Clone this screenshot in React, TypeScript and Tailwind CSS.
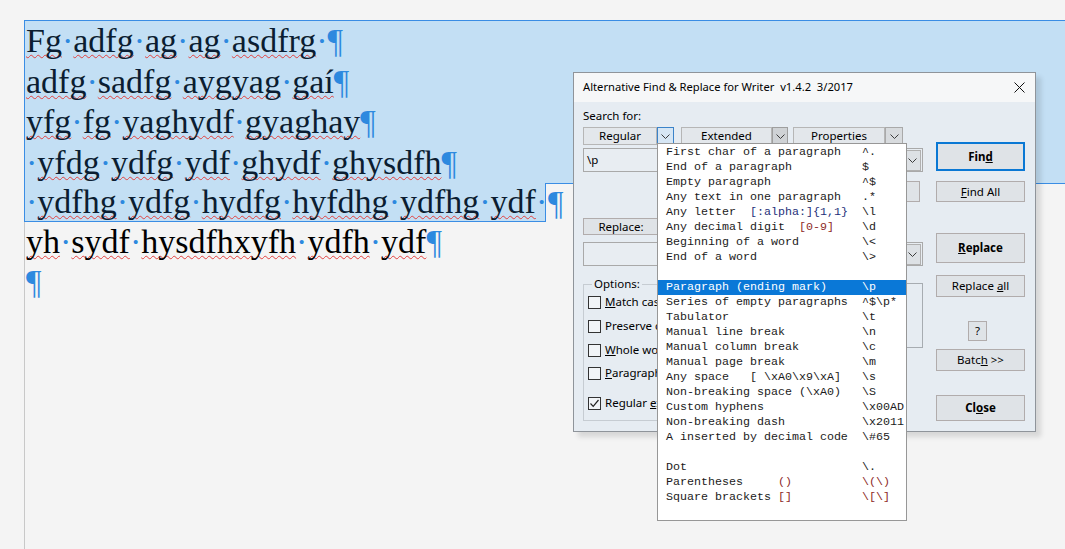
import React from 'react'

const DOT = 'text-[#2d89df]'

function DocLine({ text }: { text: string }) {
  const parts = text.split(/(·|¶)/).filter(Boolean)
  return (
    <div className="whitespace-pre">
      {parts.map((p, i) =>
        p === '·' || p === '¶' ? (
          <span key={i} className={DOT}>
            {p}
          </span>
        ) : (
          <span
            key={i}
            className="underline decoration-wavy decoration-[#e2413f] decoration-1 underline-offset-[2px] [text-decoration-skip-ink:none]"
          >
            {p}
          </span>
        ),
      )}
    </div>
  )
}

function Document() {
  return (
    <div className="flex h-full flex-col pl-[24px] pt-[20px] font-['Liberation_Serif',serif] text-[34px]">
      <div className="border-l border-t border-[#3a8de4] bg-[#c3dff4] pl-[1px] leading-[40.5px] text-[#0b1d31]">
        <DocLine text="Fg·adfg·ag·ag·asdfrg·¶" />
        <DocLine text="adfg·sadfg·aygyag·gaí¶" />
        <DocLine text="yfg·fg·yaghydf·gyaghay¶" />
        <DocLine text="·yfdg·ydfg·ydf·ghydf·ghysdfh¶" />
      </div>
      <div className="flex leading-[38px]">
        <div className="w-[522px] border-b border-l border-r border-[#3a8de4] bg-[#c3dff4] pl-[1px] text-[#0b1d31]">
          <DocLine text="·ydfhg·ydfg·hydfg·hyfdhg·ydfhg·ydf·" />
        </div>
        <div className="flex-1 border-t border-[#3a8de4] pl-[2px]">
          <span className={DOT}>¶</span>
        </div>
      </div>
      <div className="flex-1 border-l border-[#c8c8c8] pl-[1px] leading-[40px] text-black">
        <DocLine text="yh·sydf·hysdfhxyfh·ydfh·ydf¶" />
        <DocLine text="¶" />
      </div>
    </div>
  )
}

function Chevron() {
  return (
    <svg width="9" height="5" viewBox="0 0 9 5" fill="none">
      <path d="M0.5 0.5 L4.5 4.5 L8.5 0.5" stroke="#3c3c3c" strokeWidth="1" />
    </svg>
  )
}

function Btn({
  children,
  className = '',
}: {
  children: React.ReactNode
  className?: string
}) {
  return (
    <div
      className={`flex items-center justify-center border border-[#b1acac] bg-[#dfe3e7] whitespace-pre ${className}`}
    >
      {children}
    </div>
  )
}

function Combo({ label, width, arrowClass }: { label: string; width: string; arrowClass: string }) {
  return (
    <div className="flex h-full">
      <div className={`flex items-center justify-center border border-[#b6b6b6] bg-[#e3e7eb] ${width}`}>
        {label}
      </div>
      <div className={`flex items-center justify-center ${arrowClass}`}>
        <Chevron />
      </div>
    </div>
  )
}

function InputCombo({ value }: { value?: string }) {
  return (
    <div className="flex h-[24px] items-center border border-[#a9a9a9] bg-[#e8edf2] pl-[3px] pr-px">
      <span className="flex-1">{value}</span>
      <div className="flex h-[21px] w-[17px] items-center justify-center border border-[#b0b0b0] bg-[#dde1e5]">
        <Chevron />
      </div>
    </div>
  )
}

function Check({ label, checked }: { label: React.ReactNode; checked?: boolean }) {
  return (
    <div className="flex h-[16px] items-center gap-[4px]">
      <span className="flex size-[13px] shrink-0 items-center justify-center border border-[#333] bg-[#f1f4f7]">
        {checked && (
          <svg width="11" height="11" viewBox="0 0 11 11" fill="none">
            <path d="M1.5 5.5 L4.2 8.3 L9.5 2" stroke="#222" strokeWidth="1.2" />
          </svg>
        )}
      </span>
      <span className="whitespace-nowrap">{label}</span>
    </div>
  )
}

function LeftColumn() {
  return (
    <div className="flex w-[340px] flex-col">
      <div className="mt-[6px] leading-[16px]">Search for:</div>
      <div className="mt-[3px] flex h-[18px]">
        <Combo
          label="Regular"
          width="w-[74px]"
          arrowClass="w-[17px] border border-[#3b83c9] bg-[#d6e6f4]"
        />
        <div className="w-[7px]" />
        <Combo
          label="Extended"
          width="w-[91px]"
          arrowClass="w-[16px] border border-[#9e9e9e] bg-[#cfd2d5]"
        />
        <div className="w-[5px]" />
        <Combo
          label="Properties"
          width="w-[92px]"
          arrowClass="w-[18px] border border-[#a9a9a9] bg-[#d8dbde]"
        />
      </div>
      <div className="mt-[3px]">
        <InputCombo value="\p" />
      </div>
      <div className="mt-[9px] flex">
        <Btn className="ml-auto mr-[3px] h-[21px] w-[89px]">Find Next</Btn>
      </div>
      <Btn className="mt-[16px] h-[17px] w-[76px]">Replace:</Btn>
      <div className="mt-[7px]">
        <InputCombo />
      </div>
      <div className="mt-[10px] flex items-start">
        <fieldset className="h-[145px] w-[150px] border border-[#c6ccd2] pl-[4px]">
          <legend className="ml-[4px] px-[2px] leading-[16px]">Options:</legend>
          <div className="mt-[2px]">
            <Check label={<><u>M</u>atch case</>} />
          </div>
          <div className="mt-[8px]">
            <Check label="Preserve case" />
          </div>
          <div className="mt-[8px]">
            <Check label={<><u>W</u>hole words</>} />
          </div>
          <div className="mt-[7px]">
            <Check label={<><u>P</u>aragraph styles</>} />
          </div>
          <div className="mt-[14px]">
            <Check checked label={<>Regular <u>e</u>xpressions</>} />
          </div>
        </fieldset>
        <div className="ml-auto mt-[7px] h-[65px] w-[170px] border border-[#a7acb1]" />
      </div>
    </div>
  )
}

function RightColumn() {
  return (
    <div className="ml-[13px] flex w-[89px] flex-col pt-[40px]">
      <div className="flex h-[29px] items-center justify-center border-2 border-[#0a78d4] bg-[#dfe3e7] font-bold">
        Fin<u>d</u>
      </div>
      <Btn className="mt-[10px] h-[21px]">
        <u>F</u>ind All
      </Btn>
      <Btn className="mt-[31px] h-[30px] font-bold">
        <u>R</u>eplace
      </Btn>
      <Btn className="mt-[12px] h-[22px]">
        Replace <u>a</u>ll
      </Btn>
      <Btn className="ml-[32px] mt-[24px] h-[20px] w-[19px]">?</Btn>
      <Btn className="mt-[8px] h-[22px]">
        Batc<u>h</u> &gt;&gt;
      </Btn>
      <Btn className="mt-[24px] h-[26px] font-bold">
        Cl<u>o</u>se
      </Btn>
    </div>
  )
}

const NAVY = 'text-[#1e2f7a]'
const RED = 'text-[#8e2b28]'

type Row = { left?: React.ReactNode; right?: React.ReactNode; active?: boolean }

const rows: Row[] = [
  { left: 'First char of a paragraph', right: '^.' },
  { left: 'End of a paragraph', right: '$' },
  { left: 'Empty paragraph', right: '^$' },
  { left: 'Any text in one paragraph', right: '.*' },
  {
    left: (
      <>
        Any letter{'  '}
        <span className={NAVY}>[:alpha:]{'{1,1}'}</span>
      </>
    ),
    right: '\\l',
  },
  {
    left: (
      <>
        Any decimal digit{'  '}
        <span className={RED}>[0-9]</span>
      </>
    ),
    right: '\\d',
  },
  { left: 'Beginning of a word', right: '\\<' },
  { left: 'End of a word', right: '\\>' },
  {},
  { left: 'Paragraph (ending mark)', right: '\\p', active: true },
  { left: 'Series of empty paragraphs', right: '^$\\p*' },
  { left: 'Tabulator', right: '\\t' },
  { left: 'Manual line break', right: '\\n' },
  { left: 'Manual column break', right: '\\c' },
  { left: 'Manual page break', right: '\\m' },
  { left: 'Any space   [ \\xA0\\x9\\xA]', right: '\\s' },
  { left: 'Non-breaking space (\\xA0)', right: '\\S' },
  { left: 'Custom hyphens', right: '\\x00AD' },
  { left: 'Non-breaking dash', right: '\\x2011' },
  { left: 'A inserted by decimal code', right: '\\#65' },
  {},
  { left: 'Dot', right: '\\.' },
  {
    left: (
      <>
        Parentheses{'     '}
        <span className={RED}>()</span>
      </>
    ),
    right: <span className={RED}>\(\)</span>,
  },
  {
    left: (
      <>
        Square brackets <span className={RED}>[]</span>
      </>
    ),
    right: <span className={RED}>\[\]</span>,
  },
]

function Menu() {
  return (
    <div className="absolute left-[83px] top-[70px] w-[250px] border border-[#979797] bg-white pb-[15px] pt-px font-['Liberation_Mono',monospace] text-[11.67px] text-[#1b1b1b]">
      {rows.map((row, i) => (
        <div
          key={i}
          className={`flex h-[15px] whitespace-pre pl-[8px] leading-[15px] ${
            row.active ? 'bg-[#0a78d7] text-white' : ''
          }`}
        >
          <span className="w-[196px] shrink-0">{row.left}</span>
          <span>{row.right}</span>
        </div>
      ))}
    </div>
  )
}

function Dialog() {
  return (
    <div className="absolute left-[573px] top-[72px] flex h-[360px] w-[463px] flex-col border border-[#8f949a] bg-[#e6ecf2] font-['Noto_Sans',sans-serif] text-[11.5px] text-black shadow-[5px_5px_5px_rgba(0,0,0,0.12)]">
      <div className="flex h-[29px] shrink-0 items-center justify-between bg-[#f6f7f8] pl-[9px] pr-[10px]">
        <span className="whitespace-pre text-[11.2px]">Alternative Find &amp; Replace for Writer  v1.4.2  3/2017</span>
        <svg width="11" height="11" viewBox="0 0 11 11" fill="none">
          <path d="M0.5 0.5 L10.5 10.5 M10.5 0.5 L0.5 10.5" stroke="#111" strokeWidth="1" />
        </svg>
      </div>
      <div className="flex flex-1 pl-[9px]">
        <LeftColumn />
        <RightColumn />
      </div>
      <Menu />
    </div>
  )
}

export default function App() {
  return (
    <div className="relative h-[549px] w-[1065px] overflow-hidden bg-[#f4f4f4]">
      <Document />
      <Dialog />
    </div>
  )
}
